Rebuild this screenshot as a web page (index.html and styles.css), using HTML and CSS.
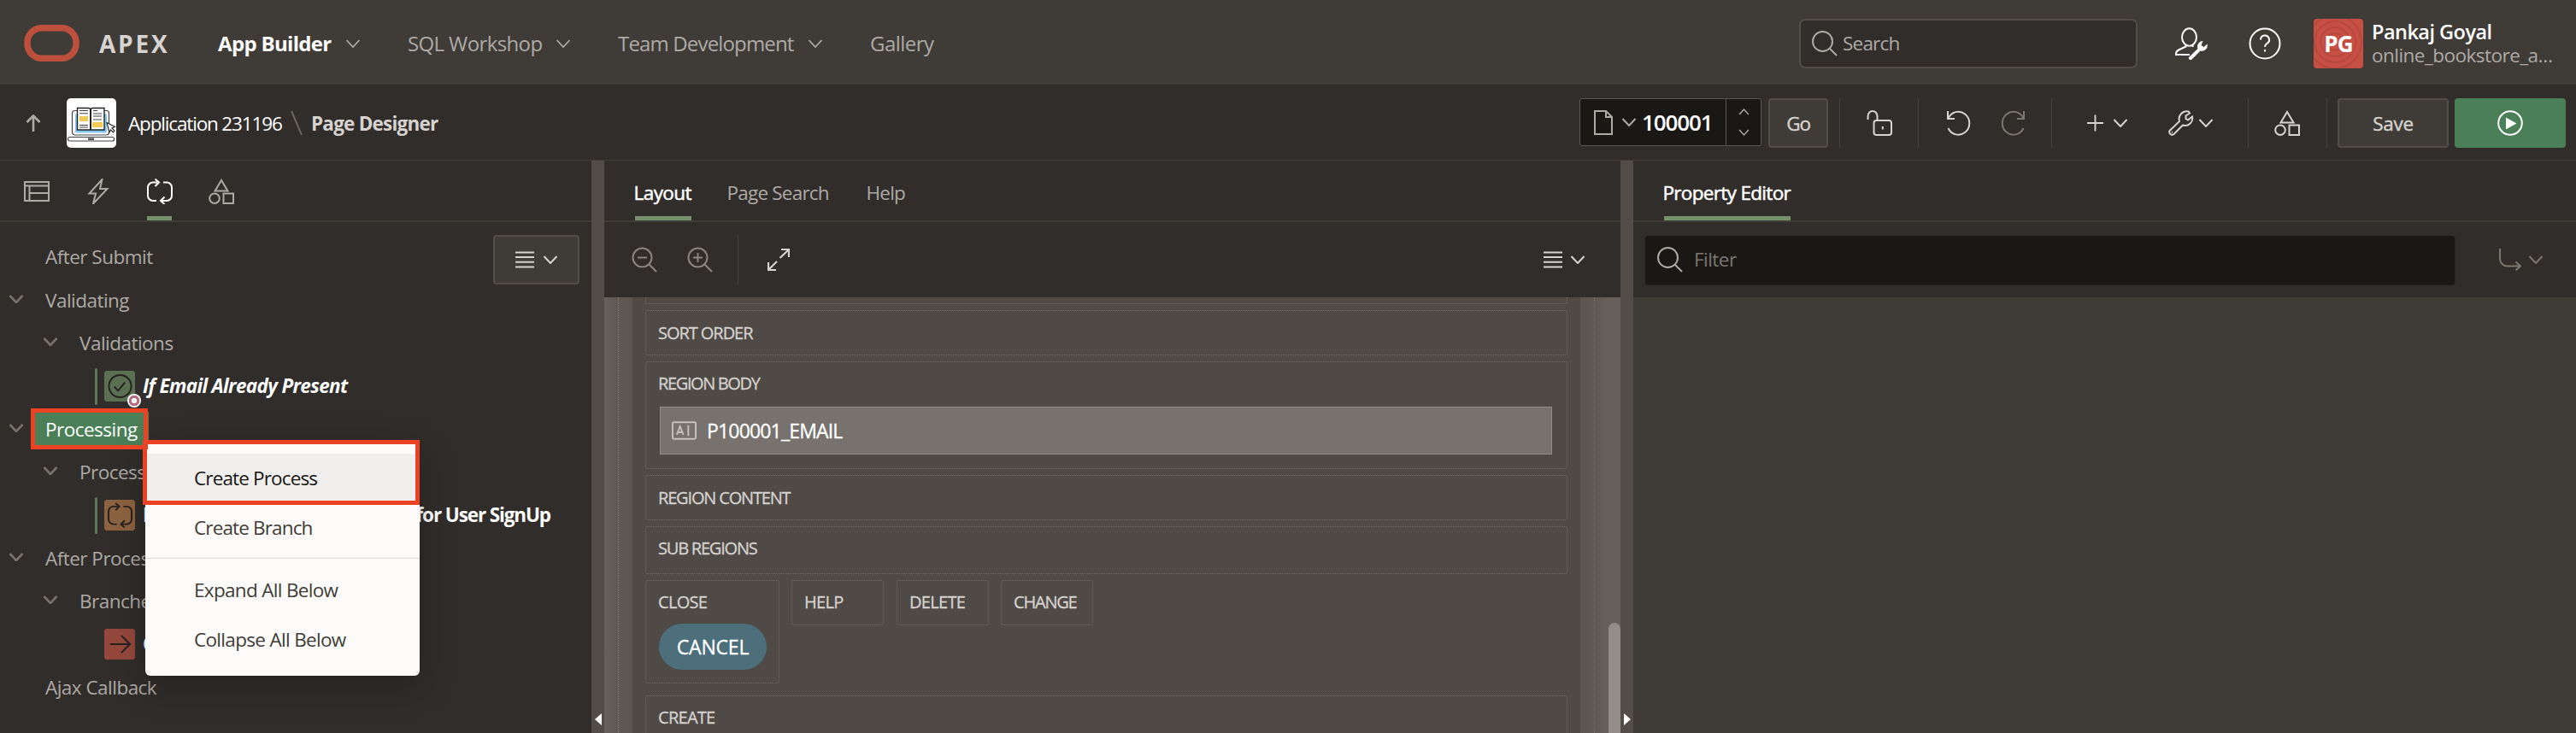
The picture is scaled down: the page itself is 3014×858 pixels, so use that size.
FILE: index.html
```html
<!DOCTYPE html>
<html lang="en">
<head>
<meta charset="utf-8">
<title>Page Designer</title>
<link rel="stylesheet" href="styles.css">
</head>
<body>
<svg class="defs" aria-hidden="true">
  <symbol id="chev" viewBox="0 0 18 10"><path d="M1.5 1 9 9l7.5-8"/></symbol>
  <symbol id="search" viewBox="0 0 30 30"><circle cx="12.5" cy="12.5" r="11.5"/><path d="M20.5 20.5 29 29"/></symbol>
  <symbol id="shapes" viewBox="0 0 30 30"><path d="M15 2 22.5 14.5H7.5ZM17.5 17.5H29V29H17.5Z"/><circle cx="7" cy="23.2" r="5.8"/></symbol>
  <symbol id="loop" viewBox="0 0 30 30"><path d="M12 4.500H7a6 6 0 0 0-6 6V20a6 6 0 0 0 6 6h4M9.500.500l4.500 4-4.500 4.500M19 4.500h4a6 6 0 0 1 6 6V20a6 6 0 0 1-6 6h-7M20.500 21.500 16 26l4.500 4"/></symbol>
  <symbol id="list" viewBox="0 0 22 20"><path d="M0 1.500h22M0 7h22M0 12.800h22M0 18.500h22"/></symbol>
  <symbol id="undo" viewBox="0 0 28 30"><path d="M1 1v9h8M1.500 9.500A13 13.500 0 1 1 1.500 21"/></symbol>
</svg>

<header class="topbar">
  <svg class="logo" viewBox="0 0 65 43"><rect x="4" y="3.700" width="57" height="35.600" rx="17"/></svg>
  <span class="brand">APEX</span>
  <nav class="nav">
    <a class="nav-item app-builder"><span>App Builder</span><svg class="chev"><use href="#chev"/></svg></a>
    <a class="nav-item sql"><span>SQL Workshop</span><svg class="chev"><use href="#chev"/></svg></a>
    <a class="nav-item team"><span>Team Development</span><svg class="chev"><use href="#chev"/></svg></a>
    <a class="nav-item gallery"><span>Gallery</span></a>
  </nav>
  <div class="global-search"><svg class="ico30"><use href="#search"/></svg><span>Search</span></div>
  <svg class="admin" viewBox="0 0 38 38"><ellipse cx="16.500" cy="11.500" rx="8.500" ry="10.200"/><path d="M12.500 20.500v2L4 26.500Q1 28 1 31v1h16M20.500 20.500v2.500"/><path class="solid" d="M16.500 34.500 26.500 25A6.500 6.500 0 0 1 32.500 16L30.500 21l3 2 4-3.500A6.500 6.500 0 0 1 29.500 27.500L19.500 37.500A2.100 2.100 0 0 1 16.500 34.500Z"/></svg>
  <svg class="help" viewBox="0 0 38 38"><circle cx="19" cy="19" r="17.500"/><path d="M14 14.500a5 5 0 1 1 7.500 4.300q-2.500 1.500-2.500 4.200M19 26v2.500"/></svg>
  <div class="avatar">
    <svg viewBox="0 0 58 58"><circle cx="25" cy="27" r="10"/><circle cx="25" cy="27" r="17"/><circle cx="25" cy="27" r="24"/><circle cx="25" cy="27" r="31"/></svg>
    <span>PG</span>
  </div>
  <div class="user"><b>Pankaj Goyal</b><span>online_bookstore_a…</span></div>
</header>

<div class="actionbar">
  <svg class="up" viewBox="0 0 18 20"><path d="M9 20V2M1.500 9 9 1.500 16.500 9"/></svg>
  <svg class="app-icon" viewBox="0 0 58 58">
    <rect width="58" height="58" rx="5" fill="#fff"/>
    <rect x="6.500" y="14.500" width="43" height="28.500" rx="3" fill="#fff" stroke="#444" stroke-width="1.200"/>
    <rect x="10" y="18" width="37" height="22.500" rx="2" fill="#85c8ee"/>
    <path d="M12.500 11.500H25q3 0 3 2 0-2 3-2h13V37H12.500Z" fill="#fff" stroke="#222" stroke-width="1.400"/>
    <path d="M28 13v24" stroke="#222" stroke-width="2"/>
    <path d="M15 14.500h10M15 17.800h10M15 31.500h10M15 34h10M31 14.500h5M31 18h10M31 21h10M31 25h10" stroke="#444" stroke-width="1"/>
    <path d="M15 21h10v6H15ZM30 28h12v6H30Z" fill="#f2ca55"/>
    <path d="m47 28.500 9.500 5-3.500 1.500 3 3-1.500 2-3-3-1.500 3Z" fill="#fff" stroke="#222" stroke-width="1.100"/>
    <rect x="1.500" y="45.500" width="54" height="4.500" rx="2" fill="#fff" stroke="#444" stroke-width="1.200"/>
    <rect x="25" y="46.500" width="7" height="2.500" fill="#555"/>
  </svg>
  <span class="crumb">Application 231196</span>
  <svg class="slash" viewBox="0 0 14 28"><path d="M1 0 13 28"/></svg>
  <b class="crumb page">Page Designer</b>
  <div class="page-field">
    <svg class="doc" viewBox="0 0 22 29"><path d="M1 1h13l7 7v20H1ZM14 1v7h7"/></svg>
    <svg class="chev"><use href="#chev"/></svg>
    <span class="page-no">100001</span>
    <div class="stepper"><svg class="flip"><use href="#chev"/></svg><svg><use href="#chev"/></svg></div>
  </div>
  <button class="btn go"><span>Go</span></button>
  <i class="sep s1"></i>
  <svg class="lock" viewBox="0 0 30 30"><rect x="8.500" y="12" width="20.500" height="17" rx="3"/><path d="M1.500 11V7A5.500 6 0 0 1 12.500 7v5M18.800 19v3.500"/></svg>
  <i class="sep s2"></i>
  <svg class="undo"><use href="#undo"/></svg>
  <svg class="undo redo"><use href="#undo"/></svg>
  <i class="sep s3"></i>
  <svg class="plus" viewBox="0 0 20 20"><path d="M10 0v20M0 10h20"/></svg>
  <svg class="chev c-plus"><use href="#chev"/></svg>
  <svg class="wrench" viewBox="0 0 30 30"><path d="M2 23.500 13 13A9 9 0 0 1 23.500 1.500L25 3.500 20.500 6.500V10L23 11.500 28 7.500A8.500 8.500 0 0 1 17 17.500L6.500 28A3.200 3.200 0 0 1 2 23.500ZM4 25.800h1"/></svg>
  <svg class="chev c-wrench"><use href="#chev"/></svg>
  <i class="sep s4"></i>
  <svg class="ico30 comps"><use href="#shapes"/></svg>
  <i class="sep s5"></i>
  <button class="btn save"><span>Save</span></button>
  <button class="btn run"><svg viewBox="0 0 30 30"><circle cx="15" cy="15" r="13.800"/><path d="M10 8.500v14L22.500 15.500Z"/></svg></button>
</div>

<main class="panes">
  <section class="left">
    <div class="tabs icon-tabs">
      <a><svg class="ico30" viewBox="0 0 30 30"><path d="M1 4h28v22H1ZM1 8.500h28M6.500 8.500V26M6.500 17H29"/></svg></a>
      <a><svg class="ico30" viewBox="0 0 30 30"><path d="M19.500 1 4.500 17.500h7.500L9 29.500 25.500 12H17Z"/></svg></a>
      <a class="current"><svg class="ico30"><use href="#loop"/></svg></a>
      <a><svg class="ico30"><use href="#shapes"/></svg></a>
    </div>
    <div class="tree-wrap">
      <ul class="tree">
        <li><span>After Submit</span></li>
        <li><svg class="chev"><use href="#chev"/></svg><span>Validating</span></li>
        <li class="l2"><svg class="chev"><use href="#chev"/></svg><span>Validations</span></li>
        <li class="leaf"><i class="bar"></i><span class="tile green"><svg viewBox="0 0 30 30"><circle cx="15" cy="15" r="13.500"/><path d="m8 15.500 4.500 5 8.500-10"/></svg><i class="dot"></i></span><b class="italic">If Email Already Present</b></li>
        <li><svg class="chev"><use href="#chev"/></svg><span class="selected">Processing</span></li>
        <li class="l2"><svg class="chev"><use href="#chev"/></svg><span>Process</span></li>
        <li class="leaf"><i class="bar"></i><span class="tile brown"><svg><use href="#loop"/></svg></span><b class="signup"><span>P</span><span>for User SignUp</span></b></li>
        <li><svg class="chev"><use href="#chev"/></svg><span>After Proces</span></li>
        <li class="l2"><svg class="chev"><use href="#chev"/></svg><span>Branche</span></li>
        <li class="leaf"><i class="bar none"></i><span class="tile red"><svg viewBox="0 0 30 30"><path d="M3 15h24M16.500 4.500 27 15 16.500 25.500"/></svg></span><b>G</b></li>
        <li><span>Ajax Callback</span></li>
      </ul>
      <button class="btn menu-btn"><svg class="list"><use href="#list"/></svg><svg class="chev"><use href="#chev"/></svg></button>
    </div>
  </section>
  <div class="splitter"><svg viewBox="0 0 8 14"><path d="M8 0v14L0 7Z"/></svg></div>
  <section class="middle">
    <div class="tabs text-tabs">
      <a class="current layout">Layout</a><a class="page-search">Page Search</a><a>Help</a>
    </div>
    <div class="toolbar">
      <svg class="ico30 dim" viewBox="0 0 30 30"><circle cx="12.500" cy="12.500" r="11"/><path d="M20.500 20.500 29 29M7 12.500h11"/></svg>
      <svg class="ico30 dim zin" viewBox="0 0 30 30"><circle cx="12.500" cy="12.500" r="11"/><path d="M20.500 20.500 29 29M7 12.500h11M12.500 7v11"/></svg>
      <i class="sep"></i>
      <svg class="expand" viewBox="0 0 26 26"><path d="M14.500 11 25 1M16 1h9v9M11 15 1 25M1 16v9h9"/></svg>
      <svg class="list"><use href="#list"/></svg><svg class="chev"><use href="#chev"/></svg>
    </div>
    <div class="canvas">
      <div class="region">
        <div class="box prev"></div>
        <div class="box sort">SORT ORDER</div>
        <div class="box body">REGION BODY
          <div class="item"><svg viewBox="0 0 30 22"><rect x="1" y="1" width="28" height="20" rx="1.500"/><path d="m6 16 4-10 4 10M7.500 13h5M20 4.500v13"/></svg><span>P100001_EMAIL</span></div>
        </div>
        <div class="box content">REGION CONTENT</div>
        <div class="box sub">SUB REGIONS</div>
        <div class="row">
          <div class="box close">CLOSE<div class="pill">CANCEL</div></div>
          <div class="box small">HELP</div>
          <div class="box small second">DELETE</div>
          <div class="box small change">CHANGE</div>
        </div>
        <div class="box create">CREATE</div>
      </div>
      <div class="scroll"></div>
    </div>
  </section>
  <div class="splitter right-arrow"><svg viewBox="0 0 8 14"><path d="M0 0v14L8 7Z"/></svg></div>
  <section class="right">
    <div class="tabs text-tabs"><a class="current editor">Property Editor</a></div>
    <div class="toolbar">
      <div class="filter"><svg class="ico30"><use href="#search"/></svg><span>Filter</span></div>
      <svg class="goto" viewBox="0 0 26 26"><path d="M1 0v12a8.500 8.500 0 0 0 8.500 8.500H25M19.500 15.500 25 20.500l-5.500 5"/></svg>
      <svg class="chev"><use href="#chev"/></svg>
    </div>
    <div class="props"></div>
  </section>
</main>

<div class="menu">
  <div class="menu-item hover">Create Process</div>
  <div class="menu-item">Create Branch</div>
  <hr>
  <div class="menu-item wide">Expand All Below</div>
  <div class="menu-item wide">Collapse All Below</div>
</div>
<div class="mark mark-node"></div>
<div class="mark mark-menu"></div>
</body>
</html>
```

FILE: styles.css
```css
* { box-sizing: border-box; }
body { margin: 0; width: 3014px; height: 858px; overflow: hidden; position: relative; background: #312d2a; color: #aeaaa6; font: 22.5px/32px "Open Sans", "Noto Sans", sans-serif; white-space: nowrap; }
svg { fill: none; stroke: currentColor; stroke-width: 2; flex: none; display: block; }
.defs { position: absolute; width: 0; height: 0; }
.chev { width: 18px; height: 10px; stroke-width: 2; }
.ico30 { width: 30px; height: 30px; }
.list { width: 22px; height: 20px; }
b { font-weight: 700; }

/* Global header */
.topbar { height: 99px; background: #3f3b36; border-bottom: 1px solid #3a3632; display: flex; align-items: center; padding: 3px 0 0 28px; }
.topbar > * { flex: none; }
.logo { width: 65px; height: 43px; color: #bd503d; stroke-width: 7.5; }
.brand { margin-left: 23px; width: 115px; font-size: 28px; font-weight: 700; letter-spacing: 2.8px; color: #d6d3d0; }
.nav { display: flex; width: 1874px; padding-left: 24px; font-size: 24px; }
.nav-item { display: flex; align-items: center; }
.nav-item .chev { stroke-width: 1.8; color: #aeaaa6; }
.app-builder { width: 222px; color: #fff; font-weight: 700; letter-spacing: -0.68px; }
.app-builder span { width: 149px; }
.sql { width: 246px; letter-spacing: -0.62px; }
.sql span { width: 173px; }
.team { width: 295px; letter-spacing: -0.84px; }
.team span { width: 222px; }
.gallery { letter-spacing: -0.53px; }
.global-search { width: 396px; height: 58px; border: 2px solid #524d49; border-radius: 7px; background: #312d2a; display: flex; align-items: center; padding-left: 13px; gap: 6px; letter-spacing: -0.79px; }
.admin { width: 38px; height: 38px; margin-left: 44px; color: #fff; }
.solid { fill: #fff; stroke: none; }
.help { width: 38px; height: 38px; margin-left: 48px; color: #fff; }
.avatar { width: 58px; height: 58px; margin-left: 38px; border-radius: 4px; background: #c74f43; overflow: hidden; display: grid; place-items: center; color: #fff; font-weight: 700; font-size: 26px; letter-spacing: -0.83px; }
.avatar > * { grid-area: 1 / 1; }
.avatar svg { width: 58px; height: 58px; color: #b8493e; }
.user { margin-left: 10px; display: flex; flex-direction: column; line-height: 28px; letter-spacing: -0.53px; }
.user b { color: #fff; font-weight: 600; font-size: 23.5px; }

/* Page toolbar */
.actionbar { height: 89px; border-bottom: 1px solid #3f3b36; display: flex; align-items: center; padding: 2px 0 0 30px; color: #d6d3d0; }
.actionbar > * { flex: none; }
.up { width: 18px; height: 20px; color: #aeaaa6; stroke-width: 2.6; }
.app-icon { width: 58px; height: 58px; margin-left: 30px; stroke: none; }
.crumb { margin-left: 14px; width: 178px; color: #fff; padding-top: 2px; letter-spacing: -1.16px; }
.crumb.page { color: #d6d3d0; margin-left: 10px; width: 149px; letter-spacing: -0.78px; }
.slash { width: 14px; height: 28px; margin-left: 12px; color: #6d6762; }
.page-field { margin-left: 1335px; width: 213px; height: 56px; margin-bottom: 2px; border: 1px solid #5c5753; border-radius: 3px; background: #191815; display: flex; align-items: center; padding-left: 16px; color: #aeaaa6; }
.doc { width: 22px; height: 29px; }
.page-field .chev { margin-left: 10px; }
.page-no { margin-left: 6px; width: 98px; font-size: 26px; font-weight: 600; color: #fff; flex: none; letter-spacing: -1.12px; }
.stepper { align-self: stretch; border-left: 1px solid #5c5753; padding: 11px 14px; display: flex; flex-direction: column; justify-content: space-between; }
.stepper svg { width: 13px; height: 8px; }
.flip { transform: scaleY(-1); }
.btn { font: inherit; color: #d6d3d0; height: 58px; padding: 0; border: 2px solid #524d49; border-radius: 4px; background: #3f3b36; display: flex; align-items: center; justify-content: center; }
.btn span { padding-top: 2px; -webkit-text-stroke: 0.4px; }
.go { width: 70px; margin-left: 8px; letter-spacing: -1.2px; }
.sep { width: 1px; height: 58px; background: #45413d; flex: none; }
.s1 { margin-left: 13px; }
.lock { width: 30px; height: 30px; margin-left: 31px; }
.s2 { margin-left: 30px; }
.undo { width: 28px; height: 30px; margin-left: 33px; }
.redo { transform: scaleX(-1); margin-left: 35px; color: #7c7671; }
.s3 { margin-left: 31px; }
.plus { width: 19px; height: 20px; margin-left: 41px; }
.c-plus { margin-left: 11px; }
.wrench { width: 30px; height: 30px; margin-left: 47px; }
.c-wrench { margin-left: 5px; }
.s4 { margin-left: 40px; }
.comps { margin-left: 30px; }
.s5 { margin-left: 31px; }
.save { width: 130px; margin-left: 12px; letter-spacing: -0.3px; }
.run { width: 130px; margin-left: 7px; background: #4b7f58; border-color: #4b7f58; color: #fff; }
.run svg { width: 30px; height: 30px; }
.run path { fill: #fff; stroke: none; }

/* Three panes */
.panes { display: flex; height: 670px; }
.left { width: 692px; }
.middle { width: 1189px; }
.right { width: 1103px; display: flex; flex-direction: column; }
.splitter { width: 15px; background: #524d49; display: flex; align-items: flex-end; padding: 0 3px 9px 4px; color: #fff; }
.splitter svg { width: 8px; height: 14px; fill: #fff; stroke: none; }
.tabs { height: 72px; border-bottom: 2px solid #3f3b36; display: flex; }
.tabs a { height: 70px; padding-top: 22px; border-bottom: 5px solid transparent; }
.tabs .current { color: #fff; border-color: #75926a; }
.icon-tabs { padding-left: 28px; gap: 43px; }
.icon-tabs a { padding-top: 21px; width: 29px; }
.text-tabs { padding-left: 36px; gap: 43px; text-indent: -1.5px; letter-spacing: -0.79px; }
.text-tabs .current { -webkit-text-stroke: 0.5px; }
.text-tabs .layout { width: 66px; letter-spacing: -0.56px; }
.text-tabs .page-search { width: 120px; }
.text-tabs .editor { width: 148px; letter-spacing: -0.68px; }
.toolbar { height: 88px; display: flex; align-items: center; }
.middle .toolbar { padding-left: 32px; color: #d6d3d0; }
.toolbar .dim { color: #8b8580; }
.zin { margin-left: 35px; }
.toolbar .sep { margin-left: 29px; }
.expand { width: 26px; height: 26px; margin-left: 34px; stroke-width: 2.2; }
.toolbar .list { margin-left: 882px; }
.toolbar .list + .chev { margin-left: 9px; }
.right .toolbar { padding-left: 14px; color: #7c7671; }
.filter { width: 947px; height: 57px; border-radius: 4px; background: #191815; display: flex; align-items: center; padding-left: 14px; gap: 13px; box-shadow: 0 1px 2px #1d1b19; letter-spacing: -0.55px; }
.filter svg { color: #aeaaa6; }
.goto { width: 26px; height: 26px; margin-left: 52px; }
.goto + .chev { margin-left: 8px; }
.props { flex: 1; background: #3f3b36; }

/* Processing tree */
.tree-wrap { display: flex; justify-content: space-between; padding: 15px 14px 0 0; }
.tree { list-style: none; margin: 1px 0 0; padding: 0; width: 560px; letter-spacing: -0.52px; }
.tree li { height: 50.35px; padding: 0 0 0 53px; display: flex; align-items: center; }
.tree li > * { flex: none; }
.tree li > .chev { margin: -4px 25px 0 -43px; color: #77726d; stroke-width: 2.6; }
.tree .l2 { padding-left: 93px; }
.tree .leaf { padding-left: 111px; color: #fff; }
.bar { width: 3px; height: 43px; background: #5f7a58; border-radius: 2px; margin-right: 8px; }
.none { background: none; }
.tile { width: 36px; height: 36px; border-radius: 3px; display: grid; place-items: center; color: #252220; margin-right: 9px; position: relative; }
.tile svg { width: 29px; height: 30px; }
.green { background: #5b7052; }
.brown { background: #8c6340; }
.red { background: #95483c; }
.dot { position: absolute; left: 27px; top: 27px; width: 16px; height: 16px; border-radius: 50%; background: radial-gradient(circle, #fff 0 3px, #b56b80 3.5px 6px, #fff 6.5px); }
.italic { font-style: italic; letter-spacing: -0.66px; }
.selected { background: #4b7f58; height: 42px; margin-left: -12px; padding: 5px 14px 0 12px; width: 133px; color: #fff; }
.signup { width: 477px; display: flex; justify-content: space-between; letter-spacing: -1.12px; }
.menu-btn { width: 101px; gap: 10px; }

/* Layout canvas */
.canvas { height: 510px; overflow: hidden; position: relative; background: #66605c; padding: 0 47px 0 33px; }
.canvas::before, .canvas::after { content: ""; position: absolute; top: 0; bottom: 0; width: 33px; background: linear-gradient(90deg, #0000, #00000012 50%, #0000001c); }
.canvas::before { left: 0; }
.canvas::after { right: 14px; transform: scaleX(-1); }
.region { background: #4f4a46; height: 520px; padding: 0 15px; position: relative; }
.region::before, .region::after { content: ""; position: absolute; top: 0; bottom: 0; border-left: 1px dotted #837d78; }
.region::before { left: -17px; }
.region::after { right: -17px; }
.box { border: 1px dotted #736d68; border-radius: 3px; padding: 0 14px; font-size: 20px; line-height: 28px; color: #d6d3d0; margin-bottom: 7px; -webkit-text-stroke: 0.3px; }
.prev { border-top: 0; border-radius: 0 0 3px 3px; height: 8px; padding: 0; }
.sort { height: 53px; padding-top: 12px; letter-spacing: -1.05px; }
.body { height: 126px; padding-top: 11px; letter-spacing: -1.37px; }
.content { height: 53px; padding-top: 12px; letter-spacing: -1.17px; }
.sub { height: 56px; padding-top: 11px; letter-spacing: -1.21px; }
.item { height: 56px; width: 1044px; margin: 13px 0 0 2px; background: #77726d; border: 1px solid #928d88; display: flex; align-items: center; padding-left: 13px; gap: 12px; color: #fff; font-size: 23px; letter-spacing: -0.83px; }
.item svg { width: 29px; height: 22px; color: #c5c1bd; }
.row { display: flex; gap: 14px; align-items: flex-start; height: 135px; letter-spacing: -0.7px; }
.row .box { padding-top: 11px; margin: 0; }
.close { width: 157px; height: 121px; }
.small { width: 108px; height: 53px; }
.row .second { margin-left: 1px; }
.row .change { letter-spacing: -1.2px; }
.pill { width: 126px; height: 54px; margin: 11px 0 0 1px; border-radius: 27px; background: #4d6f7b; color: #fff; font-size: 23px; letter-spacing: -0.19px; display: grid; place-items: center; }
.create { height: 60px; padding-top: 11px; letter-spacing: -0.72px; }
.scroll { position: absolute; right: 0; top: 381px; width: 14px; height: 160px; border-radius: 7px; background: #928d89; }

/* Context menu */
.menu { position: absolute; left: 170px; top: 517px; width: 321px; height: 274px; border-radius: 6px; background: #fcfbf9; color: #3f3b36; padding-top: 14px; box-shadow: 0 12px 40px #0004; letter-spacing: -0.85px; }
.menu-item { height: 58px; padding: 13px 0 0 57px; }
.menu .wide { letter-spacing: -0.68px; }
.menu .hover { background: #f0efed; color: #161513; }
.menu hr { border: 0; height: 1px; background: #dfddda; margin: 6px 0 8px; }
.mark { position: absolute; border: 5px solid #eb4224; }
.mark-node { left: 36px; top: 478px; width: 137px; height: 48px; }
.mark-menu { left: 167px; top: 515px; width: 324px; height: 76px; }
```
